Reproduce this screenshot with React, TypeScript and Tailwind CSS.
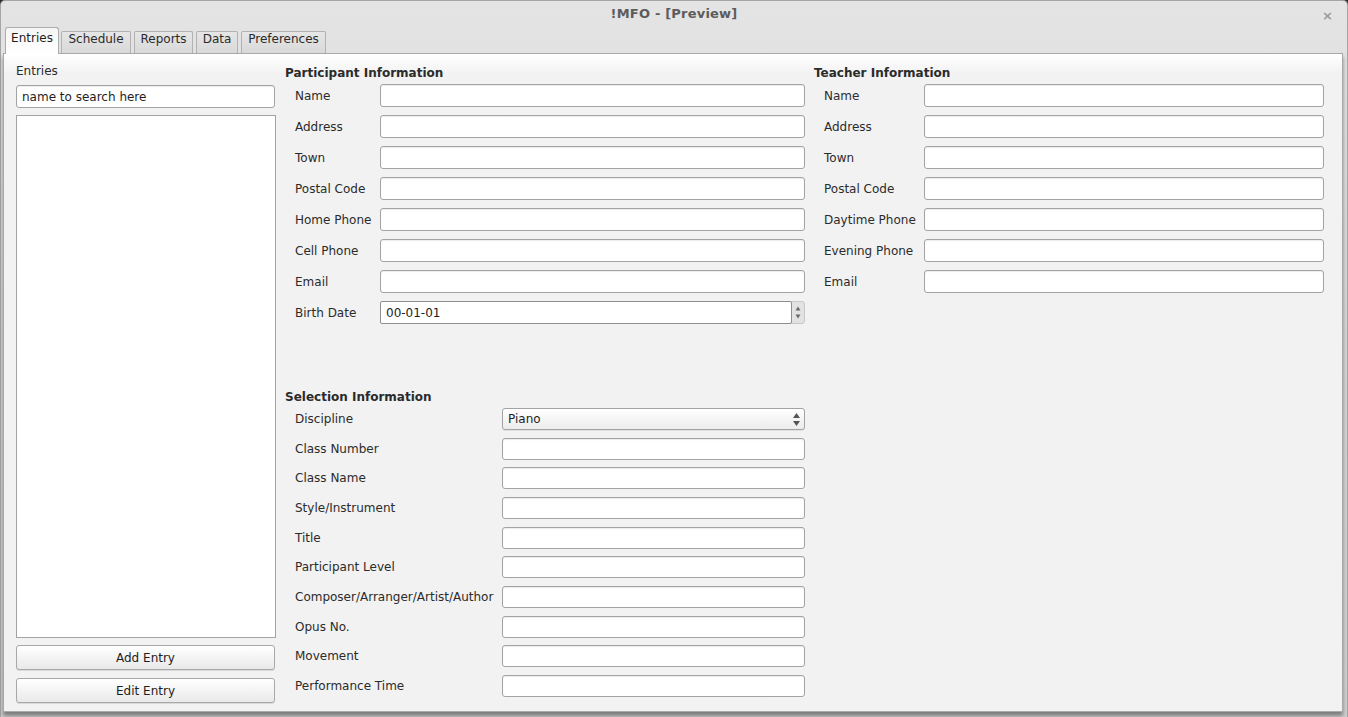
import React from "react";

const font = { fontFamily: '"DejaVu Sans", "Noto Sans", sans-serif' };

function TextInput({ value = "", className = "" }: { value?: string; className?: string }) {
  return (
    <div
      className={`h-full bg-white border border-[#a3a3a3] rounded-[3px] shadow-[inset_0_1px_1px_rgba(0,0,0,0.08)] flex items-center px-[5px] text-[12px] text-[#1e1e1e] ${className}`}
    >
      {value}
    </div>
  );
}

function Row({ label, labelW, h, children }: { label: string; labelW: string; h: string; children: React.ReactNode }) {
  return (
    <div className={`flex items-center ${h}`}>
      <div className={`${labelW} shrink-0 pl-[10px] text-[12px] text-[#2b2b2b] whitespace-nowrap`}>{label}</div>
      <div className="flex-1 h-full">{children}</div>
    </div>
  );
}

function SpinBox({ value }: { value: string }) {
  return (
    <div className="h-full flex bg-[#e2e2e2] rounded-[3px] border border-[#c8c8c8]">
      <div className="flex-1 bg-white border border-[#8f8f8f] rounded-[2px] -m-px flex items-center px-[5px] text-[12px] text-[#1e1e1e]">
        {value}
      </div>
      <div className="w-[13px] flex flex-col items-center justify-center gap-[3px] pl-px">
        <svg width="6" height="5" viewBox="0 0 6 5"><path d="M3 0.5 L5.5 4.5 L0.5 4.5 Z" fill="#6a6a6a" /></svg>
        <svg width="6" height="5" viewBox="0 0 6 5"><path d="M0.5 0.5 L5.5 0.5 L3 4.5 Z" fill="#6a6a6a" /></svg>
      </div>
    </div>
  );
}

function Combo({ value }: { value: string }) {
  return (
    <div className="h-full flex items-center justify-between bg-gradient-to-b from-white to-[#ececec] border border-[#a3a3a3] rounded-[3px] shadow-[0_1px_0_rgba(0,0,0,0.08)] pl-[5px] pr-[4px] text-[12px] text-[#1e1e1e]">
      <span>{value}</span>
      <div className="flex flex-col items-center gap-[3px]">
        <svg width="7" height="5" viewBox="0 0 7 5"><path d="M3.5 0 L7 5 L0 5 Z" fill="#555" /></svg>
        <svg width="7" height="5" viewBox="0 0 7 5"><path d="M0 0 L7 0 L3.5 5 Z" fill="#555" /></svg>
      </div>
    </div>
  );
}

function Button({ label }: { label: string }) {
  return (
    <div className="h-[25px] flex items-center justify-center bg-gradient-to-b from-white to-[#e9e9e9] border border-[#a8a8a8] rounded-[3px] shadow-[0_1px_0_rgba(0,0,0,0.1)] text-[12px] text-[#1e1e1e]">
      {label}
    </div>
  );
}

function Tab({ label, active = false, w, ml }: { label: string; active?: boolean; w: string; ml: string }) {
  if (active) {
    return (
      <div className={`${w} ${ml} h-[27px] -mb-px relative z-10 flex justify-center pt-[3px] leading-[15px] bg-gradient-to-b from-[#f6f6f6] to-white border border-b-0 border-[#ababab] rounded-t-[3px] text-[12px] text-[#1e1e1e]`}>
        {label}
      </div>
    );
  }
  return (
    <div className={`${w} ${ml} h-[22px] flex justify-center leading-[15px] bg-gradient-to-b from-[#e6e6e6] to-[#d9d9d9] border border-b-0 border-[#b2b2b2] rounded-t-[2px] text-[12px] text-[#2b2b2b]`}>
      {label}
    </div>
  );
}

export default function App() {
  const participant = ["Name", "Address", "Town", "Postal Code", "Home Phone", "Cell Phone", "Email"];
  const teacher = ["Name", "Address", "Town", "Postal Code", "Daytime Phone", "Evening Phone", "Email"];
  const selection = [
    "Class Number",
    "Class Name",
    "Style/Instrument",
    "Title",
    "Participant Level",
    "Composer/Arranger/Artist/Author",
    "Opus No.",
    "Movement",
    "Performance Time",
  ];
  return (
    <div style={font} className="w-[1348px] h-[717px] bg-[#2a2a2a] overflow-hidden">
      <div className="w-full h-full flex flex-col bg-gradient-to-b from-[#e4e4e4] via-[#d6d6d6] to-[#d0d0d0] rounded-t-[5px] border-t border-x border-[#a5a5a5]">
        {/* title bar */}
        <div className="h-[26px] shrink-0 flex items-center relative">
          <div className="flex-1 text-center text-[13px] font-bold text-[#5c5c5c] tracking-[0.2px]">!MFO - [Preview]</div>
          <div className="absolute right-[14px] top-[5px] text-[13px] font-bold text-[#9a9a9a]">×</div>
        </div>
        {/* tabs */}
        <div className="flex items-end pl-[4px] h-[26px] shrink-0">
          <Tab label="Entries" active w="w-[54px]" ml="ml-0" />
          <Tab label="Schedule" w="w-[70px]" ml="ml-[2px]" />
          <Tab label="Reports" w="w-[59px]" ml="ml-[3px]" />
          <Tab label="Data" w="w-[42px]" ml="ml-[3px]" />
          <Tab label="Preferences" w="w-[85px]" ml="ml-[3px]" />
        </div>
        {/* pane */}
        <div className="flex-1 mx-[2px] mr-[4px] bg-gradient-to-b from-white via-[#f2f2f2] via-[3%] to-[#f2f2f2] border border-[#a9a9a9] flex pt-[10px] pl-[12px] text-[#2b2b2b] shadow-[0_4px_4px_rgba(0,0,0,0.4)]">
          {/* left column */}
          <div className="w-[260px] shrink-0 flex flex-col">
            <div className="text-[12px] h-[15px] leading-[15px] pl-[0px] mb-[6px]">Entries</div>
            <div className="h-[23px] pr-px">
              <TextInput value="name to search here" />
            </div>
            <div className="h-[523px] mt-[7px] bg-white border border-[#a3a3a3]" />
            <div className="mt-[7px] pr-px">
              <Button label="Add Entry" />
            </div>
            <div className="mt-[8px] pr-px">
              <Button label="Edit Entry" />
            </div>
          </div>
          {/* middle column */}
          <div className="w-[520px] ml-[9px] shrink-0 flex flex-col">
            <div className="text-[12px] font-bold h-[15px] leading-[15px] mt-[2px] mb-[3px]">Participant Information</div>
            <div className="flex flex-col gap-[8px]">
              {participant.map((l) => (
                <Row key={l} label={l} labelW="w-[95px]" h="h-[23px]">
                  <TextInput />
                </Row>
              ))}
              <Row label="Birth Date" labelW="w-[95px]" h="h-[23px]">
                <SpinBox value="00-01-01" />
              </Row>
            </div>
            <div className="text-[12px] font-bold h-[15px] leading-[15px] mt-[66px] mb-[3px]">Selection Information</div>
            <div className="flex flex-col gap-[7.67px]">
              <Row label="Discipline" labelW="w-[217px]" h="h-[22px]">
                <Combo value="Piano" />
              </Row>
              {selection.map((l) => (
                <Row key={l} label={l} labelW="w-[217px]" h="h-[22px]">
                  <TextInput />
                </Row>
              ))}
            </div>
          </div>
          {/* right column */}
          <div className="w-[510px] ml-[9px] shrink-0 flex flex-col">
            <div className="text-[12px] font-bold h-[15px] leading-[15px] mt-[2px] mb-[3px]">Teacher Information</div>
            <div className="flex flex-col gap-[8px]">
              {teacher.map((l) => (
                <Row key={l} label={l} labelW="w-[110px]" h="h-[23px]">
                  <TextInput />
                </Row>
              ))}
            </div>
          </div>
        </div>
        <div className="h-[5px] shrink-0" />
      </div>
    </div>
  );
}
